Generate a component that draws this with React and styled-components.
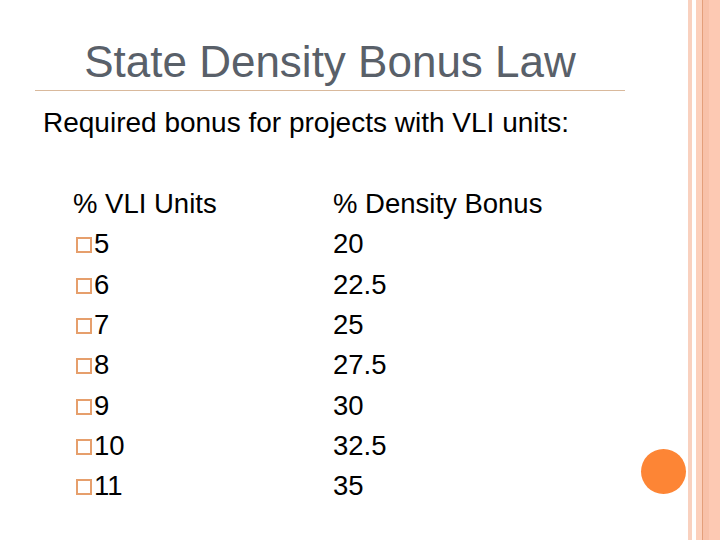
import React from "react";
import styled, { createGlobalStyle } from "styled-components";

const Global = createGlobalStyle`
  html, body { margin: 0; padding: 0; background: #ffffff; }
  body { font-family: "Liberation Sans", Arial, sans-serif; }
`;

const Slide = styled.div`
  position: relative;
  width: 720px;
  height: 540px;
  display: flex;
  overflow: hidden;
  background: #ffffff;
`;

const Main = styled.div`
  flex: 1;
  padding: 0 63px 0 35px;
  display: flex;
  flex-direction: column;
`;

const Title = styled.h1`
  margin: 0;
  padding: 37px 0 3px;
  border-bottom: 1px solid #d9b99c;
  font-size: 44px;
  font-weight: 400;
  line-height: 50px;
  color: #596069;
  text-align: center;
`;

const Lead = styled.p`
  margin: 15px 0 0 8px;
  font-size: 28px;
  line-height: 34px;
  color: #000000;
`;

const Table = styled.div`
  margin: 44px 0 0 38px;
  display: grid;
  grid-template-columns: 260px auto;
  font-size: 27.5px;
  line-height: 40.33px;
  color: #000000;
`;

const Cell = styled.div`
  white-space: nowrap;
`;

const Box = styled.span`
  display: inline-block;
  box-sizing: border-box;
  width: 16px;
  height: 16px;
  margin: 0 2px 0 3px;
  border: 2px solid #e69f6c;
  vertical-align: baseline;
`;

const Stripes = styled.div`
  width: 32px;
  flex: none;
  background: linear-gradient(
    to right,
    #f9d1bf 0 4px,
    #ffffff 4px 8px,
    #fcd0bc 8px 14px,
    #e49f7b 14px 15px,
    #f8c1a9 15px 21px,
    #fdc9b3 21px 32px
  );
`;

const Dot = styled.div`
  position: absolute;
  left: 641px;
  top: 449px;
  width: 45px;
  height: 45px;
  border-radius: 50%;
  background: #fd8535;
`;

const rows = [
  ["5", "20"],
  ["6", "22.5"],
  ["7", "25"],
  ["8", "27.5"],
  ["9", "30"],
  ["10", "32.5"],
  ["11", "35"],
];

export default function App() {
  return (
    <>
      <Global />
      <Slide>
        <Main>
          <Title>State Density Bonus Law</Title>
          <Lead>Required bonus for projects with VLI units:</Lead>
          <Table>
            <Cell>% VLI Units</Cell>
            <Cell>% Density Bonus</Cell>
            {rows.map(([u, b]) => (
              <React.Fragment key={u}>
                <Cell>
                  <Box />
                  {u}
                </Cell>
                <Cell>{b}</Cell>
              </React.Fragment>
            ))}
          </Table>
        </Main>
        <Stripes />
        <Dot />
      </Slide>
    </>
  );
}
